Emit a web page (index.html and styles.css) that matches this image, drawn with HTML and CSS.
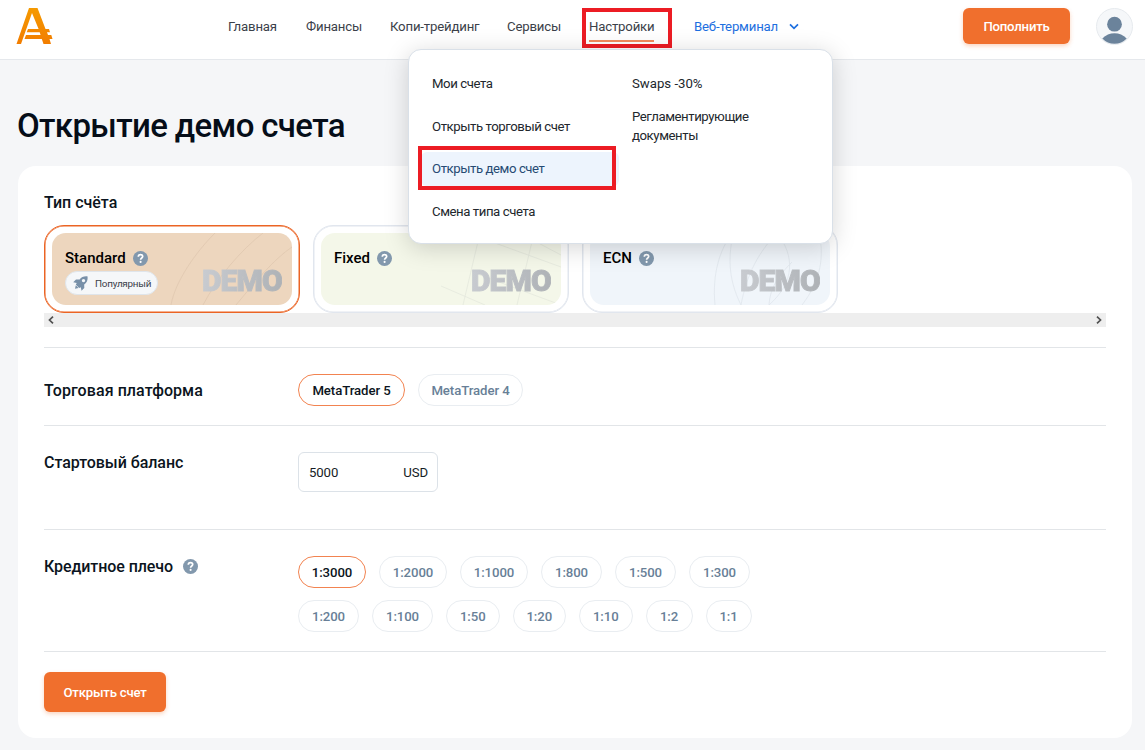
FILE: index.html
```html
<!DOCTYPE html>
<html lang="ru">
<head>
<meta charset="utf-8">
<title>Открытие демо счета</title>
<link rel="stylesheet" href="styles.css">
</head>
<body>
<svg class="defs" width="0" height="0" aria-hidden="true">
  <symbol id="help" viewBox="0 0 15 15">
    <circle cx="7.5" cy="7.5" r="7.5" fill="#8298ad"/>
    <path d="M5.3 5.8C5.3 4.3 6.2 3.6 7.5 3.6S9.7 4.4 9.7 5.6C9.7 7 7.6 7.1 7.6 8.8" fill="none" stroke="#fff" stroke-width="1.7"/>
    <circle cx="7.6" cy="10.9" r="1.05" fill="#fff"/>
  </symbol>
</svg>
<header class="header">
  <a class="logo"><svg width="38" height="38" viewBox="0 0 38 38">
    <defs><linearGradient id="lg" x1="0" y1="0" x2="0" y2="1"><stop offset="0" stop-color="#f59a00"/><stop offset="1" stop-color="#f27d00"/></linearGradient></defs>
    <path fill="url(#lg)" d="M13 1H21.5L29.5 22H33L34 25.3H31L32 28H35.3L36.5 32H33.5L35 37H27.5L25.8 32H8.5L10 28H24.6L23.7 25.3H10.7L12 22H22.6L16 6L5 37H.5Z"/>
  </svg></a>
  <nav class="nav">
    <a class="nav-item w1">Главная</a>
    <a class="nav-item w2">Финансы</a>
    <a class="nav-item w3">Копи-трейдинг</a>
    <a class="nav-item w4">Сервисы</a>
    <a class="nav-item w5 current">Настройки<span class="mark mark-nav"></span></a>
    <a class="nav-item terminal"><span class="w6">Веб-терминал</span><svg width="10" height="7" viewBox="0 0 10 7"><path d="M1 1.3L5 5.3L9 1.3" fill="none" stroke="#1d6fe0" stroke-width="1.7"/></svg></a>
  </nav>
  <button class="btn deposit">Пополнить</button>
  <svg class="avatar" width="37" height="37" viewBox="0 0 37 37">
    <circle cx="18.5" cy="18.5" r="18" fill="#f5f7f9" stroke="#e6eaee"/>
    <circle cx="18.5" cy="16.2" r="7.4" fill="#6b839b"/>
    <path d="M6.3 30.5Q11.5 25.3 18.5 25.3T30.7 30.5Q25.7 35.8 18.5 35.8T6.3 30.5Z" fill="#6b839b"/>
  </svg>
  <div class="menu">
    <div class="menu-col">
      <a>Мои счета</a>
      <a>Открыть торговый счет</a>
      <a class="active">Открыть демо счет<span class="mark mark-menu"></span></a>
      <a>Смена типа счета</a>
    </div>
    <div class="menu-col second">
      <a class="latin">Swaps -30%</a>
      <a class="double">Регламентирующие документы</a>
    </div>
  </div>
</header>
<main class="main">
  <h1>Открытие демо счета</h1>
  <section class="panel">
    <h2 class="label type-label">Тип счёта</h2>
    <div class="accounts">
      <div class="account selected"><div class="face standard">
        <svg class="lines" width="240" height="72" viewBox="0 0 240 72" fill="none" stroke="#dfc8b0" stroke-width=".8"><path d="M119 72C123 49 143 20 163 0M151 72C165 45 189 17 211 0M184 72C203 49 222 26 240 14" /></svg>
        <div class="name">Standard<svg class="help" width="15" height="15"><use href="#help"/></svg></div>
        <span class="badge"><svg width="15" height="15" viewBox="0 0 15 15" fill="#7890a8"><path fill-rule="evenodd" d="M14.6.4C10.8.1 8.5 1 6.6 3.5L3 3.4.2 6.3l3.6.6-1 1.7 3.4 3.5 1.6-.9.7 3.5 2.8-2.8-.1-3.5C13.9 6.5 14.9 4 14.6.4ZM10.5 2.9a1.7 1.7 0 1 1 0 3.4 1.7 1.7 0 0 1 0-3.4Z"/><path d="M2.8 9.2L5.6 12 2 12.8Z"/></svg>Популярный</span>
        <b class="demo">DEMO</b>
      </div></div>
      <div class="account"><div class="face fixed">
        <svg class="lines" width="240" height="72" viewBox="0 0 240 72" fill="none" stroke="#e5e9dd" stroke-width=".8"><path d="M142 72L159 0M196 72L213 0M163 6L240 34M206 4L240 22M120 53L164 72M151 39L240 72"/></svg>
        <div class="name">Fixed<svg class="help" width="15" height="15"><use href="#help"/></svg></div>
        <b class="demo">DEMO</b>
      </div></div>
      <div class="account"><div class="face ecn">
        <svg class="lines" width="240" height="72" viewBox="0 0 240 72" fill="none" stroke="#dfe6ec" stroke-width=".8"><path d="M125 72C122 40 130 17 142 0M151 72C137 44 139 22 143 0M179 72C205 49 205 23 187 0M212 72C232 46 234 22 229 0M151 72C157 40 169 19 187 0M179 72C180 55 188 43 202 29"/></svg>
        <div class="name">ECN<svg class="help" width="15" height="15"><use href="#help"/></svg></div>
        <b class="demo">DEMO</b>
      </div></div>
    </div>
    <div class="scroll">
      <svg width="6" height="8" viewBox="0 0 6 8"><path d="M5 .7L1.5 4L5 7.3" fill="none" stroke="#505050" stroke-width="1.7"/></svg>
      <svg width="6" height="8" viewBox="0 0 6 8"><path d="M1 .7L4.5 4L1 7.3" fill="none" stroke="#505050" stroke-width="1.7"/></svg>
    </div>
    <div class="row platform">
      <h2 class="label">Торговая платформа</h2>
      <div class="pills"><span class="pill on p106">MetaTrader 5</span><span class="pill p105">MetaTrader 4</span></div>
    </div>
    <div class="row balance">
      <h2 class="label">Стартовый баланс</h2>
      <div class="field"><span>5000</span><span>USD</span></div>
    </div>
    <div class="row leverage">
      <h2 class="label">Кредитное плечо<svg class="help" width="15" height="15"><use href="#help"/></svg></h2>
      <div class="pill-rows">
        <div class="pills"><span class="pill on p68">1:3000</span><span class="pill p68">1:2000</span><span class="pill p68">1:1000</span><span class="pill p61">1:800</span><span class="pill p61">1:500</span><span class="pill p61">1:300</span></div>
        <div class="pills"><span class="pill p61">1:200</span><span class="pill p61">1:100</span><span class="pill p53">1:50</span><span class="pill p53">1:20</span><span class="pill p53">1:10</span><span class="pill p47">1:2</span><span class="pill p46">1:1</span></div>
      </div>
    </div>
    <div class="submit"><button class="btn open">Открыть счет</button></div>
  </section>
</main>
</body>
</html>
```
FILE: styles.css
```css
* { box-sizing: border-box; }
body {
  margin: 0;
  height: 750px;
  overflow: hidden;
  background: #f5f6f8;
  color: #0b1420;
  font-family: Roboto, "Noto Sans", sans-serif;
  font-size: 13.2px;
}
h1, h2 { margin: 0; font-weight: 500; }
svg { display: block; flex: none; }
.defs { position: absolute; }

.header {
  position: relative;
  z-index: 2;
  display: flex;
  align-items: flex-start;
  height: 60px;
  padding: 7px 12px 0 16px;
  background: #fff;
  border-bottom: 1px solid #e5e8ec;
}
.logo { width: 212px; }
.nav { display: flex; gap: 28px; height: 40px; letter-spacing: -.18px; }
.nav-item {
  position: relative;
  height: 35px;
  line-height: 39px;
  white-space: nowrap;
  color: #3b4149;
}
.w1 { width: 50px; }
.w2 { width: 56px; }
.w3 { width: 89px; }
.w4 { width: 54px; }
.w5 { width: 65px; }
.w6 { width: 85px; }
.current { border-bottom: 2px solid #f28b5e; }
.terminal { display: flex; align-items: center; gap: 10px; margin-left: 12px; color: #1d6fe0; height: 39px; }
.terminal svg { margin-bottom: 1px; }
.mark { position: absolute; border: 4px solid #ec1c24; }
.mark-nav { left: -7px; top: 1px; width: 90px; height: 40px; }
.mark-menu { left: -3px; top: -6px; width: 198px; height: 44px; }

.btn {
  border: 0;
  border-radius: 6px;
  background: #f06f2d;
  color: #fff;
  font: 500 13.2px Roboto, "Noto Sans", sans-serif;
  letter-spacing: -.22px;
  box-shadow: 0 2px 4px rgba(240, 111, 45, .3);
}
.deposit { width: 107px; height: 36px; margin: 1px 26px 0 auto; }
.avatar { margin-top: 1px; }

.menu {
  position: absolute;
  left: 408px;
  top: 49px;
  width: 425px;
  height: 195px;
  padding: 17px 12px;
  display: flex;
  background: #fff;
  border: 1px solid #d9e0e8;
  border-radius: 13px;
  box-shadow: 0 4px 24px rgba(0, 0, 0, .17);
  letter-spacing: -.43px;
}
.menu .latin { letter-spacing: 0; }
.menu-col { width: 198px; display: flex; flex-direction: column; gap: 9px; }
.menu-col a {
  position: relative;
  display: block;
  height: 33.7px;
  padding-left: 11px;
  border-radius: 6px;
  line-height: 34px;
  white-space: nowrap;
  color: #22272d;
}
.menu-col .active { background: #edf4fd; color: #264a73; }
.second a { padding-left: 13px; }
.menu-col .double { width: 150px; height: 40px; line-height: 19.5px; white-space: normal; margin-top: -3px; }

.main { padding: 47px 13px 0 18px; }
h1 { height: 59px; font-size: 33px; line-height: 38px; letter-spacing: -.65px; color: #050d18; margin-left: -1px; }
.panel { height: 572px; padding: 26px 26px 0; background: #fff; border-radius: 18px; }
.label { display: flex; align-items: center; height: 20px; font-size: 16px; white-space: nowrap; color: #0b1420; }
.type-label { margin-bottom: 13px; }

.accounts { display: flex; gap: 13px; }
.account { width: 256px; height: 88px; padding: 7px; border: 1px solid #e1e6ee; border-radius: 20px; box-shadow: inset 0 0 0 .5px #e1e6ee; }
.account.selected { border-color: #eb6424; box-shadow: inset 0 0 0 .5px #eb6424; }
.face { position: relative; height: 72px; padding: 16px 13px 0; border-radius: 14px; overflow: hidden; }
.standard { background: #edd6be; }
.fixed { background: #f4f7e9; }
.ecn { background: #f0f5fa; }
.lines { position: absolute; left: 0; top: 0; }
.name { position: relative; display: flex; align-items: center; gap: 7px; height: 18px; font-size: 15px; font-weight: 500; color: #000; }
.badge {
  position: relative;
  display: flex;
  align-items: center;
  gap: 7px;
  width: 93px;
  height: 24px;
  margin-top: 4px;
  padding-left: 7px;
  border: 1px solid #dfe5eb;
  border-radius: 12px;
  background: #f5f7f9;
  color: #3b4149;
  font-size: 9.9px;
  letter-spacing: -.24px;
}
.demo {
  position: absolute;
  right: 10px;
  bottom: 6px;
  font-size: 30px;
  line-height: 36px;
  font-weight: 900;
  letter-spacing: -.8px;
  color: transparent;
  -webkit-text-stroke: 1px transparent;
  background: linear-gradient(100deg, #c9ccd1, #adb1b5);
  background-clip: text;
  -webkit-background-clip: text;
}

.scroll { display: flex; justify-content: space-between; align-items: center; height: 14px; padding: 0 4px; margin-bottom: 20px; background: #eee; }

.row { display: flex; border-top: 1px solid #e2e5e8; }
.row > .label { width: 254px; flex: none; }
.label .help { margin-left: 10px; }
.platform { height: 78px; padding-top: 26px; }
.platform .label { margin-top: 6px; letter-spacing: .08px; }
.balance .label { letter-spacing: -.05px; }
.leverage .label { letter-spacing: -.08px; }
.pills { display: flex; gap: 13px; }
.pill {
  display: flex;
  justify-content: center;
  align-items: center;
  height: 32px;
  border: 1px solid #e9edf1;
  border-radius: 16px;
  font-weight: 500;
  letter-spacing: -.08px;
  color: #687f97;
}
.pill.on { border-color: #f28350; color: #0b1420; }
.p106 { width: 107px; }
.p105 { width: 105px; }
.p68 { width: 68px; }
.p61 { width: 61px; }
.p53 { width: 53.5px; }
.p47 { width: 47px; }
.p46 { width: 46px; }
.balance { height: 104px; padding-top: 26px; }
.field { display: flex; justify-content: space-between; align-items: center; width: 140px; height: 40px; padding: 0 9px 0 10px; border: 1px solid #dce2e8; border-radius: 6px; letter-spacing: -.1px; color: #151c25; }
.leverage { height: 123px; padding-top: 26px; border-bottom: 1px solid #e2e5e8; }
.pill-rows { display: flex; flex-direction: column; gap: 12px; }
.submit { padding-top: 20px; }
.open { display: block; width: 122px; height: 40px; }
```
